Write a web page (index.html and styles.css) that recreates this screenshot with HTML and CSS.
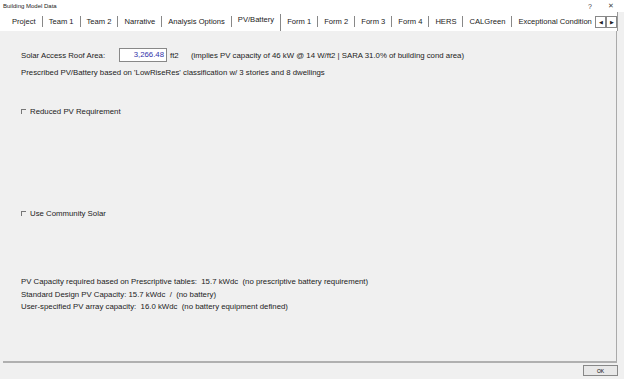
FILE: index.html
```html
<!DOCTYPE html>
<html lang="en">

<head>
    <meta charset="UTF-8">
    <title>Building Model Data</title>
    <link rel="stylesheet" href="styles.css">
</head>

<body>
    <div class="titlebar">
        <span class="title">Building Model Data</span>
        <span class="ctrl help">?</span>
        <span class="ctrl close">&#x2715;</span>
    </div>

    <div class="tabs">
        <span class="tab">Project</span>
        <span class="tab">Team 1</span>
        <span class="tab">Team 2</span>
        <span class="tab">Narrative</span>
        <span class="tab">Analysis Options</span>
        <span class="tab active">PV/Battery</span>
        <span class="tab">Form 1</span>
        <span class="tab">Form 2</span>
        <span class="tab">Form 3</span>
        <span class="tab">Form 4</span>
        <span class="tab">HERS</span>
        <span class="tab">CALGreen</span>
        <span class="tab last">Exceptional Condition</span>
        <span class="arrows">
            <span class="arrow">&#9664;</span><span class="arrow">&#9654;</span>
        </span>
    </div>

    <div class="panel">
        <div class="row area-row">
            <span class="label">Solar Access Roof Area:</span>
            <span class="field">3,266.48</span>
            <span class="unit">ft2</span>
            <span class="note">(implies PV capacity of 46 kW @ 14 W/ft2 | SARA 31.0% of building cond area)</span>
        </div>
        <div class="row">Prescribed PV/Battery based on 'LowRiseRes' classification w/ 3 stories and 8 dwellings</div>

        <label class="check reduced"><span class="box"></span>Reduced PV Requirement</label>
        <label class="check community"><span class="box"></span>Use Community Solar</label>

        <div class="summary">
            <div>PV Capacity required based on Prescriptive tables:&nbsp; 15.7 kWdc&nbsp; (no prescriptive battery requirement)</div>
            <div>Standard Design PV Capacity: 15.7 kWdc&nbsp; /&nbsp; (no battery)</div>
            <div>User-specified PV array capacity:&nbsp; 16.0 kWdc&nbsp; (no battery equipment defined)</div>
        </div>
    </div>

    <div class="footer">
        <button class="ok">OK</button>
    </div>
</body>

</html>
```

FILE: styles.css
```css
body {
    margin: 0;
    width: 624px;
    height: 379px;
    background-color: #f0f0f0;
    font-family: "Liberation Sans", Arial, sans-serif;
    font-size: 7.8px;
    color: #222;
    overflow: hidden;
}

.titlebar {
    height: 12px;
    background-color: #fff;
    display: flex;
    align-items: center;
    padding-left: 3px;
    font-size: 6px;
}

.title {
    flex: 1;
}

.ctrl {
    font-size: 7px;
    color: #444;
}

.help {
    margin-right: 16px;
}

.close {
    margin-right: 10px;
}

.tabs {
    height: 19px;
    background-color: #fff;
    display: flex;
    align-items: center;
    padding-left: 6px;
    font-size: 7.6px;
    white-space: nowrap;
    border-right: 1px solid #999;
    margin-right: 6px;
}

.tab {
    flex-shrink: 0;
    padding: 0 6px;
    border-right: 1px solid #888;
    line-height: 11px;
}

.tab.active {
    align-self: flex-end;
    padding-bottom: 5px;
    line-height: 12px;
}

.tab.last {
    flex: 1;
    min-width: 0;
    overflow: hidden;
    border-right: none;
    padding-right: 0;
}

.arrows {
    display: flex;
    flex-shrink: 0;
}

.arrow {
    width: 9px;
    height: 10px;
    border: 1px solid #888;
    font-size: 5px;
    display: flex;
    align-items: center;
    justify-content: center;
    background-color: #fff;
}

.panel {
    height: 330px;
    margin: 0 7px 0 3px;
    border-bottom: 2px solid #b0b0b0;
    border-right: 1px solid #aaa;
    padding-left: 18px;
    display: flex;
    flex-direction: column;
}

.row {
    display: flex;
    align-items: center;
}

.area-row {
    margin-top: 17px;
    height: 14px;
}

.area-row + .row {
    margin-top: 6px;
}

.label {
    width: 98px;
}

.field {
    width: 44px;
    height: 12px;
    border: 1px solid #888;
    background-color: #fff;
    color: #3333aa;
    text-align: right;
    padding-right: 2px;
    line-height: 12px;
}

.unit {
    margin-left: 3px;
    width: 21px;
}

.check {
    display: flex;
    align-items: center;
}

.box {
    width: 4px;
    height: 4px;
    border-top: 1px solid #777;
    border-left: 1px solid #777;
    margin-right: 4px;
}

.reduced {
    margin-top: 30px;
}

.community {
    margin-top: 93px;
}

.summary {
    margin-top: 58px;
    line-height: 12.5px;
}

.footer {
    display: flex;
    justify-content: flex-end;
    padding: 2px 6px 0 0;
}

.ok {
    width: 35px;
    height: 11px;
    border: 1px solid #888;
    background-color: #e8e8e8;
    font-family: inherit;
    font-size: 5px;
    padding: 0;
}
```
